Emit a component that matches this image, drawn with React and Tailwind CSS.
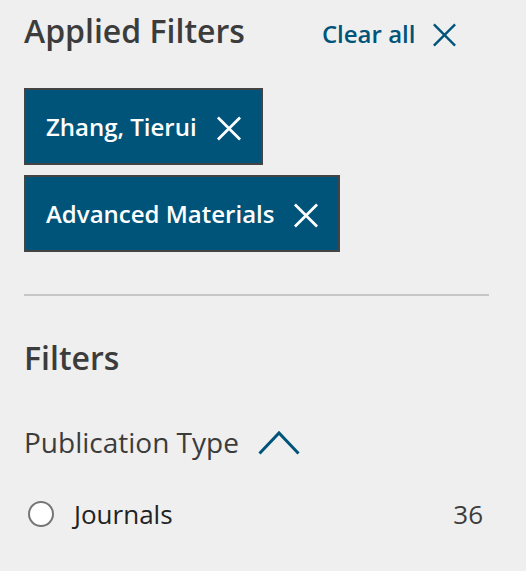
import React from "react";

function XIcon({ className, stroke = 2.5 }) {
  return (
    <svg viewBox="0 0 26 26" className={className} fill="none" stroke="currentColor" strokeWidth={stroke} strokeLinecap="butt">
      <line x1="1.5" y1="1.5" x2="24.5" y2="24.5" />
      <line x1="24.5" y1="1.5" x2="1.5" y2="24.5" />
    </svg>
  );
}

function Tag({ label }) {
  return (
    <div className="flex h-[77px] items-center gap-[19px] self-start border-2 border-[#444444] bg-[#00547a] pl-[20px] pr-[19px]">
      <span className="text-[24px] font-semibold leading-[32px] text-white">{label}</span>
      <XIcon className="mt-[4px] h-[25px] w-[26px] text-white" stroke={2.8} />
    </div>
  );
}

export default function App() {
  return (
    <div
      className="min-h-[571px] w-[526px] bg-[#efefef] pl-[24px] pt-[11px] text-[#3c3c3c]"
      style={{ fontFamily: '"Open Sans", sans-serif' }}
    >
      <div className="w-[465px]">
        <div className="flex h-[40px] items-baseline">
          <h2 className="text-[32px] font-semibold leading-[40px]">Applied Filters</h2>
          <button className="ml-[77px] flex items-baseline gap-[17px] text-[24px] font-semibold leading-[32px] text-[#00547a]">
            <span>Clear all</span>
            <XIcon className="h-[24px] w-[25px] translate-y-[4px] text-[#00547a]" stroke={2.6} />
          </button>
        </div>

        <div className="mt-[37px] flex flex-col gap-[10px]">
          <Tag label="Zhang, Tierui" />
          <Tag label="Advanced Materials" />
        </div>

        <div className="mt-[42px] h-[2px] w-[465px] bg-[#c6c6c6]" />

        <h2 className="mt-[42px] text-[32px] font-semibold leading-[40px]">Filters</h2>

        <div className="mt-[46px] flex items-center gap-[19px]">
          <span className="text-[28px] leading-[36px]">Publication Type</span>
          <svg viewBox="0 0 42 25" className="h-[25px] w-[42px] text-[#00547a]" fill="none" stroke="currentColor" strokeWidth="3">
            <polyline points="1.5,23.5 21,3 40.5,23.5" />
          </svg>
        </div>

        <div className="mt-[38px] flex items-center pl-[4px] pr-[6px]">
          <span className="h-[26px] w-[26px] rounded-full border-2 border-[#767676] bg-white" />
          <span className="ml-[20px] text-[26px] leading-[32px] text-[#222222]">Journals</span>
          <span className="ml-auto text-[26px] leading-[32px] text-[#3c3c3c]">36</span>
        </div>
      </div>
    </div>
  );
}
